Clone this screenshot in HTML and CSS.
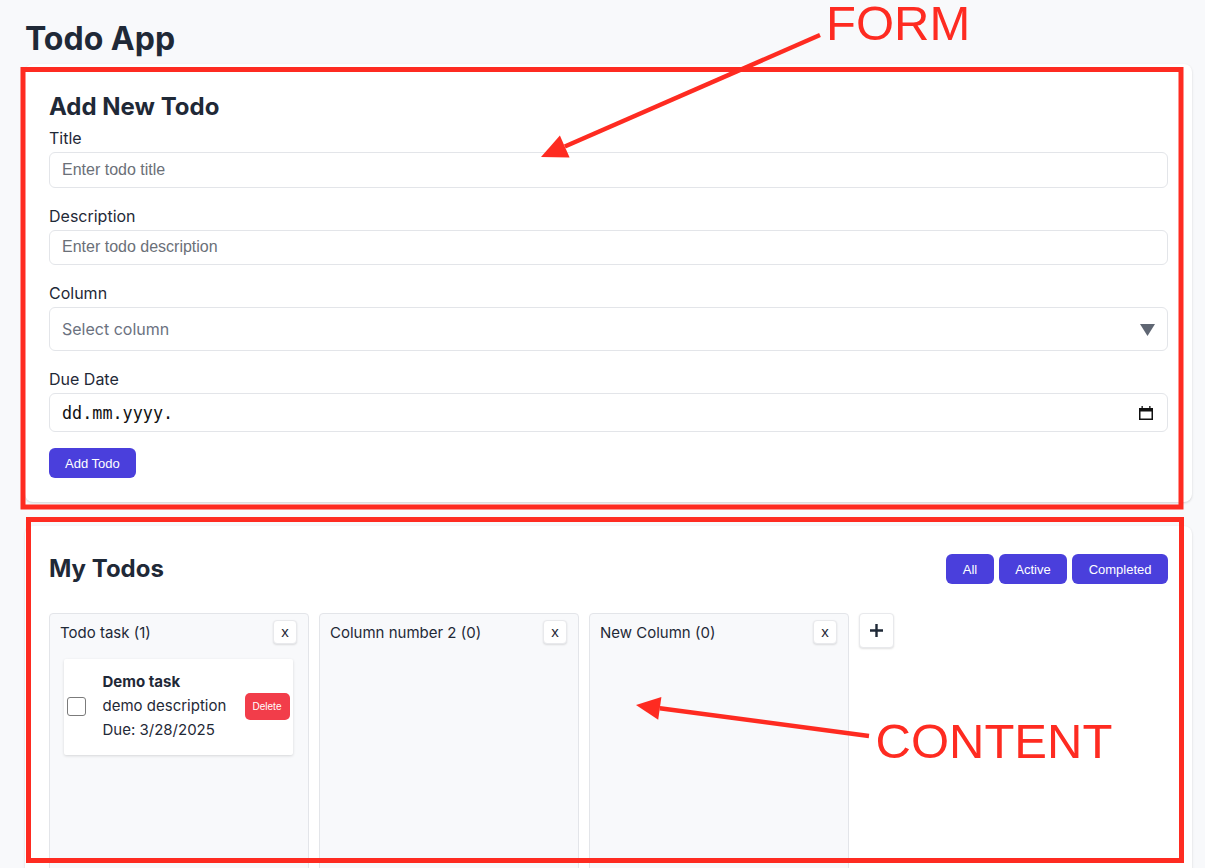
FILE: index.html
```html
<!DOCTYPE html>
<html lang="en">
<head>
<meta charset="utf-8">
<title>Todo App</title>
<link rel="stylesheet" href="styles.css">
</head>
<body>
<div class="app">
  <h1 class="app-title">Todo App</h1>

  <section class="card form-card">
    <h2 class="card-title form-title">Add New Todo</h2>
    <div class="field">
      <label class="field-label">Title</label>
      <input class="text-input" type="text" placeholder="Enter todo title">
    </div>
    <div class="field">
      <label class="field-label">Description</label>
      <input class="text-input" type="text" placeholder="Enter todo description">
    </div>
    <div class="field">
      <label class="field-label">Column</label>
      <div class="select-input">
        <span class="select-text">Select column</span>
        <svg class="select-arrow" width="15" height="12" viewBox="0 0 15 12"><polygon points="0,0 15,0 7.5,12" fill="#5f6673"/></svg>
      </div>
    </div>
    <div class="field">
      <label class="field-label">Due Date</label>
      <div class="date-input">
        <span class="date-text">dd.mm.yyyy.</span>
        <svg class="date-icon" width="14" height="14" viewBox="0 0 14 14">
          <rect x="0.75" y="2.75" width="12.5" height="10.5" fill="none" stroke="#111" stroke-width="1.5"/>
          <rect x="0" y="2" width="14" height="3.5" fill="#111"/>
          <rect x="2.5" y="0" width="1.3" height="2.5" fill="#111"/>
          <rect x="10.2" y="0" width="1.3" height="2.5" fill="#111"/>
        </svg>
      </div>
    </div>
    <button class="btn-primary">Add Todo</button>
  </section>

  <section class="card board-card">
    <div class="board-header">
      <h2 class="card-title board-title">My Todos</h2>
      <div class="filters">
        <button class="btn-primary">All</button>
        <button class="btn-primary">Active</button>
        <button class="btn-primary">Completed</button>
      </div>
    </div>
    <div class="columns">
      <div class="column">
        <div class="column-header">
          <span class="column-name">Todo task (1)</span>
          <button class="col-close">x</button>
        </div>
        <div class="column-list">
          <div class="task">
            <input class="task-check" type="checkbox">
            <div class="task-body">
              <div class="task-title">Demo task</div>
              <div class="task-line">demo description</div>
              <div class="task-line">Due: 3/28/2025</div>
            </div>
            <button class="btn-delete">Delete</button>
          </div>
        </div>
      </div>
      <div class="column">
        <div class="column-header">
          <span class="column-name">Column number 2 (0)</span>
          <button class="col-close">x</button>
        </div>
        <div class="column-list"></div>
      </div>
      <div class="column">
        <div class="column-header">
          <span class="column-name">New Column (0)</span>
          <button class="col-close">x</button>
        </div>
        <div class="column-list"></div>
      </div>
      <button class="add-column">
        <svg width="15" height="15" viewBox="0 0 15 15"><path d="M7.5 1v13M1 7.5h13" stroke="#1f2937" stroke-width="2.4" fill="none"/></svg>
      </button>
    </div>
  </section>
</div>

<svg class="annotations" width="1205" height="868" viewBox="0 0 1205 868">
  <rect x="23" y="69.5" width="1158" height="437.5" fill="none" stroke="#fe2b21" stroke-width="5"/>
  <rect x="28.5" y="519.5" width="1153" height="341" fill="none" stroke="#fe2b21" stroke-width="5"/>
  <line x1="820" y1="35" x2="564.8" y2="146.5" stroke="#fe2b21" stroke-width="4.5"/>
  <polygon points="541,157 569.6,157.5 559.9,135.5" fill="#fe2b21"/>
  <line x1="869" y1="736" x2="659.8" y2="708.3" stroke="#fe2b21" stroke-width="4.5"/>
  <polygon points="636,705 661.4,696.9 658.2,719.7" fill="#fe2b21"/>
  <text class="note" x="826" y="40">FORM</text>
  <text class="note" x="875.5" y="758">CONTENT</text>
</svg>
</body>
</html>
```

FILE: styles.css
```css
html, body {
  margin: 0;
  padding: 0;
  overflow: hidden;
}

body {
  background: #f8f9fb;
  font-family: Inter, "Noto Sans", sans-serif;
  color: #1f2937;
  width: 1205px;
  height: 868px;
  position: relative;
}

.app {
  padding: 19px 13px 0 25px;
}

.app-title {
  margin: 0 0 5px;
  font-size: 32px;
  line-height: 40px;
  font-weight: 700;
  color: #1f2937;
}

.card {
  background: #ffffff;
  border-radius: 8px;
  box-shadow: 0 1px 3px rgba(0, 0, 0, 0.10), 0 1px 2px rgba(0, 0, 0, 0.06);
  padding: 24px;
}

.form-card {
  margin-bottom: 24px;
}

.card-title {
  margin: 0;
  font-size: 24px;
  font-weight: 700;
  color: #1f2937;
}

.form-title {
  line-height: 37px;
  margin-bottom: 1px;
}

.field {
  margin-bottom: 16px;
}

.field-label {
  display: block;
  font-size: 16px;
  line-height: 24px;
  margin-bottom: 2px;
  color: #1f2937;
}

.text-input {
  display: block;
  box-sizing: border-box;
  width: 100%;
  height: 35.5px;
  border: 1px solid #e3e5e9;
  border-radius: 6px;
  padding: 0 12px;
  font-family: "Liberation Sans", Arial, sans-serif;
  font-size: 16px;
  color: #1f2937;
  background: #fff;
  outline: none;
}

.text-input::placeholder {
  color: #6b7078;
}

.select-input {
  box-sizing: border-box;
  height: 44px;
  border: 1px solid #e3e5e9;
  border-radius: 6px;
  padding: 0 12px 0 12px;
  display: flex;
  align-items: center;
  justify-content: space-between;
  background: #fff;
}

.select-text {
  font-size: 16px;
  color: #6b7280;
}

.select-arrow {
  display: block;
  margin-top: 1px;
}

.date-input {
  box-sizing: border-box;
  height: 39px;
  border: 1px solid #e3e5e9;
  border-radius: 6px;
  padding: 0 14px 0 12px;
  display: flex;
  align-items: center;
  justify-content: space-between;
  background: #fff;
}

.date-text {
  font-family: "DejaVu Sans Mono", "Liberation Mono", monospace;
  font-size: 16.8px;
  color: #111;
}

.date-icon {
  display: block;
}

.btn-primary {
  height: 30px;
  padding: 0 16px;
  border: none;
  border-radius: 6px;
  background: #4a3fdc;
  color: #fff;
  font-family: "Liberation Sans", Arial, sans-serif;
  font-size: 13px;
  cursor: pointer;
}

.board-card {
  min-height: 400px;
  padding-top: 25px;
}

.board-header {
  height: 36px;
  display: flex;
  align-items: center;
  justify-content: space-between;
  margin-bottom: 26px;
}

.board-title {
  line-height: 36px;
}

.filters {
  display: flex;
  gap: 5px;
}

.filters .btn-primary {
  height: 30.5px;
  padding: 0 16.5px;
}

.columns {
  display: flex;
  align-items: flex-start;
  gap: 10px;
}

.column {
  box-sizing: border-box;
  width: 260px;
  min-height: 320px;
  background: #f8f9fb;
  border: 1px solid #e3e5e9;
  border-radius: 4px;
  padding: 6px 11px 10px 10px;
}

.column-header {
  display: flex;
  align-items: center;
  justify-content: space-between;
  height: 24px;
  margin-bottom: 15px;
}

.column-name {
  font-size: 15px;
  color: #1f2937;
}

.col-close {
  box-sizing: border-box;
  width: 24px;
  height: 24px;
  padding: 0 0 2px;
  border: 1px solid #e8e9ec;
  border-radius: 4px;
  background: #fff;
  box-shadow: 0 1px 2px rgba(0, 0, 0, 0.12);
  font-family: "Liberation Sans", Arial, sans-serif;
  font-size: 15px;
  color: #1f2937;
}

.column-list {
  padding: 0 4px;
}

.task {
  display: flex;
  align-items: center;
  background: #fff;
  border-radius: 2px;
  box-shadow: 0 1px 3px rgba(0, 0, 0, 0.14);
  padding: 11px 3.5px 13px 3px;
}

.task-check {
  appearance: none;
  -webkit-appearance: none;
  box-sizing: border-box;
  width: 19px;
  height: 19px;
  margin: 0 16.5px 0 0;
  border: 1.3px solid #7b7b7b;
  border-radius: 3px;
  background: #fff;
  flex: none;
}

.task-body {
  flex: 1;
  font-size: 15px;
  line-height: 24px;
  color: #1f2937;
}

.task-title {
  font-weight: 700;
}

.btn-delete {
  width: 45px;
  height: 27px;
  padding: 0;
  border: none;
  border-radius: 5px;
  background: #f23d4a;
  color: #fff;
  font-family: "Liberation Sans", Arial, sans-serif;
  font-size: 10px;
}

.add-column {
  box-sizing: border-box;
  width: 35px;
  height: 35px;
  padding: 0;
  display: flex;
  align-items: center;
  justify-content: center;
  border: 1px solid #e8e9ec;
  border-radius: 4px;
  background: #fff;
  box-shadow: 0 1px 2px rgba(0, 0, 0, 0.12);
}

.annotations {
  position: absolute;
  left: 0;
  top: 0;
  pointer-events: none;
}

.note {
  font-family: "Liberation Sans", Arial, sans-serif;
  font-size: 49px;
  fill: #fe2b21;
}
```
